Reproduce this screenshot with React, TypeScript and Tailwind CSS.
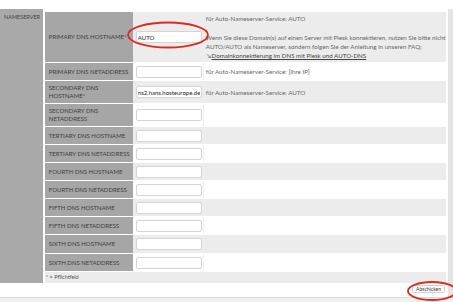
import React from "react";

type Row = {
  label: React.ReactNode;
  value?: string;
  info?: React.ReactNode;
  h: string;
};

const rows: Row[] = [
  { label: "PRIMARY DNS HOSTNAME*", value: "AUTO", h: "h-[51px]" },
  { label: "PRIMARY DNS NETADDRESS", info: "für Auto-Nameserver-Service: [Ihre IP]", h: "h-[18px]" },
  {
    label: (
      <>
        SECONDARY DNS
        <br />
        HOSTNAME*
      </>
    ),
    value: "ns2.hans.hosteurope.de",
    info: "für Auto-Nameserver-Service: AUTO",
    h: "h-[23px]",
  },
  {
    label: (
      <>
        SECONDARY DNS
        <br />
        NETADDRESS
      </>
    ),
    h: "h-[23px]",
  },
  { label: "TERTIARY DNS HOSTNAME", h: "h-[18px]" },
  { label: "TERTIARY DNS NETADDRESS", h: "h-[18px]" },
  { label: "FOURTH DNS HOSTNAME", h: "h-[18px]" },
  { label: "FOURTH DNS NETADDRESS", h: "h-[18px]" },
  { label: "FIFTH DNS HOSTNAME", h: "h-[18px]" },
  { label: "FIFTH DNS NETADDRESS", h: "h-[18px]" },
  { label: "SIXTH DNS HOSTNAME", h: "h-[19px]" },
  { label: "SIXTH DNS NETADDRESS", h: "h-[18px]" },
];

const App = () => {
  return (
    <div className="relative w-[453px] h-[302px] overflow-hidden bg-white font-['Lato',sans-serif] text-[#555]">
      <div className="flex pt-[9px]">
        {/* Section label */}
        <div className="w-[43px] h-[274px] bg-[#a9a9a9] pl-[4px] pt-[4px] text-[5.5px] leading-[8px] text-[#444]">
          NAMESERVER
        </div>

        {/* Form table */}
        <div className="ml-[2px] w-[403px] pt-[3px]">
          {rows.map((r, i) => (
            <div
              key={i}
              className={`flex border-b border-white ${r.h} ${i % 2 === 0 ? "bg-[#ececec]" : "bg-white"}`}
            >
              <div className="w-[88px] shrink-0 bg-[#a6a6a6] pl-[4px] flex items-center text-[6px] leading-[8px] text-[#404040]">
                <span>{r.label}</span>
              </div>
              <div className="w-[70px] shrink-0 flex items-center pl-[3px]">
                <input
                  readOnly
                  value={r.value ?? ""}
                  className="w-[66px] h-[12px] border border-[#d4d4d4] rounded-[2px] bg-white px-[1px] text-[6px] text-[#222] font-['Lato',sans-serif] outline-none"
                />
              </div>
              <div className="flex-1 pl-[2px] text-[6.2px] leading-[9px] text-[#666] flex items-center border-l border-[#eeeeee]">
                {i === 0 ? (
                  <div className="self-start pt-[2px]">
                    <div>für Auto-Nameserver-Service: AUTO</div>
                    <div className="mt-[10px]">
                      Wenn Sie diese Domain(s) auf einen Server mit Plesk konnektieren, nutzen Sie bitte nicht
                      <br />
                      AUTO/AUTO als Nameserver, sondern folgen Sie der Anleitung in unseren FAQ:
                      <br />
                      <span className="pl-[1px]">↘</span>
                      <span className="underline text-[#444]">Domainkonnektierung im DNS mit Plesk und AUTO-DNS</span>
                    </div>
                  </div>
                ) : (
                  <span>{r.info}</span>
                )}
              </div>
            </div>
          ))}
          <div className="h-[11px] bg-[#ececec] pl-[1px] text-[5.5px] leading-[11px] text-[#555]">* = Pflichtfeld</div>
          <div className="h-[11px] flex items-center justify-end">
            <button className="h-[8px] px-[3px] mr-[1px] border border-[#cfcfcf] rounded-[2px] bg-white text-[5px] leading-[6px] text-[#333]">
              Abschicken
            </button>
          </div>
        </div>

        <div className="ml-[2px] w-[5px] h-[288px] bg-[#e4e4e4]" />
      </div>

      {/* bottom strip */}
      <div className="border-t border-[#d8d8d8] h-[10px] bg-[#f0f0f0]" />

      {/* red annotation marks */}
      <svg className="absolute left-0 top-0 pointer-events-none" width="453" height="302">
        <ellipse cx="168" cy="35" rx="40" ry="12.5" fill="none" stroke="#dd2a1f" strokeWidth="1.8" />
        <ellipse cx="432" cy="291" rx="24" ry="9" fill="none" stroke="#dd2a1f" strokeWidth="1.8" />
      </svg>
    </div>
  );
};

export default App;
